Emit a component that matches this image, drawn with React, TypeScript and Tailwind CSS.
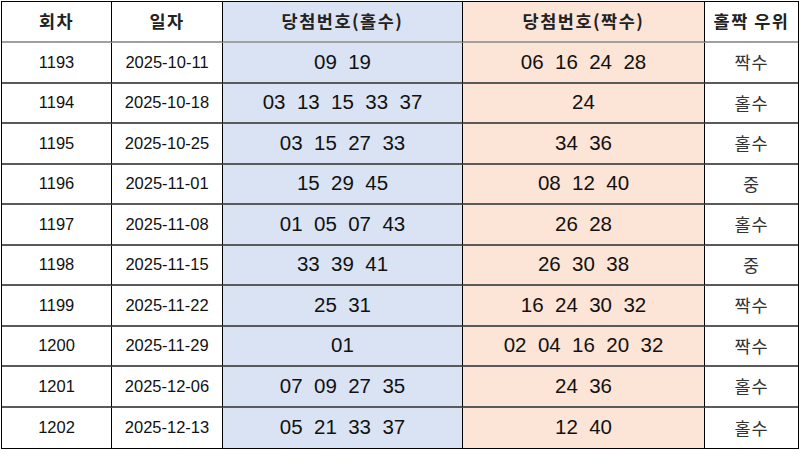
import React from "react";

type Row = { no: string; date: string; odd: string[]; even: string[]; lead: string };

const rows: Row[] = [
  { no: "1193", date: "2025-10-11", odd: ["09", "19"], even: ["06", "16", "24", "28"], lead: "짝수" },
  { no: "1194", date: "2025-10-18", odd: ["03", "13", "15", "33", "37"], even: ["24"], lead: "홀수" },
  { no: "1195", date: "2025-10-25", odd: ["03", "15", "27", "33"], even: ["34", "36"], lead: "홀수" },
  { no: "1196", date: "2025-11-01", odd: ["15", "29", "45"], even: ["08", "12", "40"], lead: "중" },
  { no: "1197", date: "2025-11-08", odd: ["01", "05", "07", "43"], even: ["26", "28"], lead: "홀수" },
  { no: "1198", date: "2025-11-15", odd: ["33", "39", "41"], even: ["26", "30", "38"], lead: "중" },
  { no: "1199", date: "2025-11-22", odd: ["25", "31"], even: ["16", "24", "30", "32"], lead: "짝수" },
  { no: "1200", date: "2025-11-29", odd: ["01"], even: ["02", "04", "16", "20", "32"], lead: "짝수" },
  { no: "1201", date: "2025-12-06", odd: ["07", "09", "27", "35"], even: ["24", "36"], lead: "홀수" },
  { no: "1202", date: "2025-12-13", odd: ["05", "21", "33", "37"], even: ["12", "40"], lead: "홀수" },
];

const kr = "font-['Malgun_Gothic','Noto_Sans_CJK_KR',sans-serif]";
const num = "font-['Liberation_Sans','Noto_Sans_CJK_KR',sans-serif]";

export default function App() {
  return (
    <div className="w-[800px] h-[450px] bg-white overflow-hidden">
      <div className="mt-px ml-px w-[798px] h-[448px] border-[1.5px] border-black grid grid-cols-[110px_111px_240px_242px_1fr] grid-rows-[41px_repeat(10,1fr)] text-[#111]">
        {["회차", "일자", "당첨번호(홀수)", "당첨번호(짝수)", "홀짝 우위"].map((h, i) => (
          <div
            key={h}
            className={`flex items-center justify-center border-b-2 border-b-[#a0a0a0] font-bold text-[17.5px] tracking-[1.5px] text-[#222] ${kr} ${
              i < 4 ? "border-r-[1.5px] border-r-black" : ""
            } ${i === 2 ? "bg-[#dae3f3]" : i === 3 ? "bg-[#fce4d6]" : "bg-white"}`}
          >
            {h}
          </div>
        ))}
        {rows.map((r, idx) => {
          const bottom = idx < rows.length - 1 ? "border-b-2 border-b-[#5a5a5a]" : "";
          return (
            <React.Fragment key={r.no}>
              <div className={`flex items-center justify-center border-r-[1.5px] border-r-black text-[16.5px] ${num} ${bottom}`}>
                {r.no}
              </div>
              <div className={`flex items-center justify-center border-r-[1.5px] border-r-black text-[16.5px] ${num} ${bottom}`}>
                {r.date}
              </div>
              <div className={`flex items-center justify-center bg-[#dae3f3] border-r-[1.5px] border-r-black text-[20.5px] whitespace-pre ${num} ${bottom}`}>
                {r.odd.join("  ")}
              </div>
              <div className={`flex items-center justify-center bg-[#fce4d6] border-r-[1.5px] border-r-black text-[20.5px] whitespace-pre ${num} ${bottom}`}>
                {r.even.join("  ")}
              </div>
              <div className={`flex items-center justify-center text-[17.5px] tracking-[1px] text-[#333] ${kr} ${bottom}`}>{r.lead}</div>
            </React.Fragment>
          );
        })}
      </div>
    </div>
  );
}
